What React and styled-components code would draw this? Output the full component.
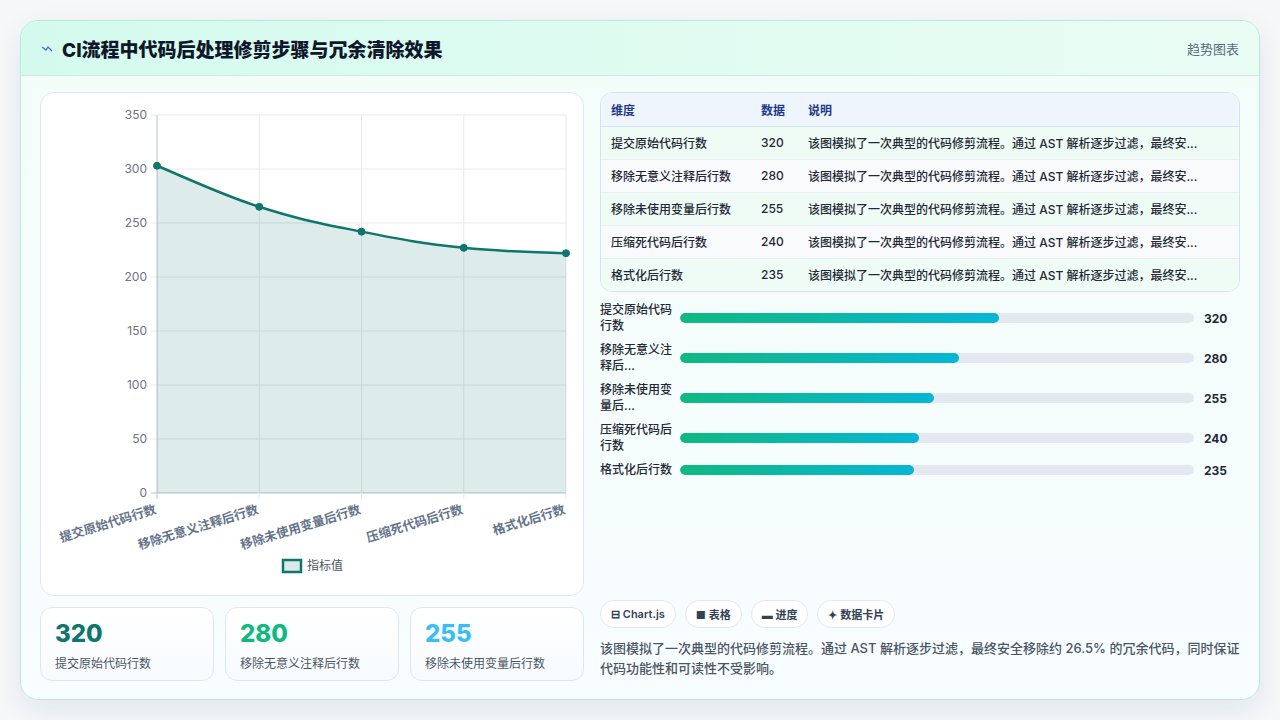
import React from "react";
import styled, { createGlobalStyle } from "styled-components";

const Global = createGlobalStyle`
  html, body { margin: 0; padding: 0; background: #f3f6f8; }
  body { font-family: Inter, "Noto Sans CJK SC", sans-serif; }
  * { box-sizing: border-box; }
`;

const Page = styled.div`
  width: 1280px;
  height: 720px;
  padding: 20px;
  background: #f5f7f9;
`;

const Card = styled.div`
  height: 680px;
  border-radius: 18px;
  border: 1px solid #b4ecdc;
  background: linear-gradient(180deg, #f2fdf8 0%, #f8fdff 100%);
  box-shadow: 0 10px 30px rgba(15, 40, 60, 0.08);
  overflow: hidden;
  display: flex;
  flex-direction: column;
`;

const Header = styled.div`
  height: 56px;
  display: flex;
  align-items: center;
  justify-content: space-between;
  padding: 0 20px;
  background: linear-gradient(90deg, #d4faee 0%, #eafdf4 100%);
  border-bottom: 1px solid #cde9e8;
`;

const Title = styled.h1`
  margin: 0;
  font-size: 19px;
  font-weight: 800;
  color: #0f172a;
  display: flex;
  align-items: center;
  gap: 9px;
`;

const Tag = styled.span`
  font-size: 13px;
  color: #5b6b80;
`;

const Body = styled.div`
  flex: 1;
  display: grid;
  grid-template-columns: 544px 640px;
  gap: 16px;
  padding: 16px 19px 18px 19px;
`;

const Col = styled.div`
  display: flex;
  flex-direction: column;
  gap: ${p => p.$gap || 0}px;
`;

const ChartCard = styled.div`
  height: 504px;
  background: #fff;
  border: 1px solid #e1e8ef;
  border-radius: 14px;
  overflow: hidden;
`;

const Kpis = styled.div`
  display: grid;
  grid-template-columns: repeat(3, 1fr);
  gap: 11px;
`;

const Kpi = styled.div`
  height: 74px;
  border: 1px solid #dce7f3;
  border-radius: 12px;
  background: linear-gradient(180deg, #ffffff, #f7fbfe);
  padding: 12px 14px;
`;

const KpiValue = styled.div`
  font-size: 24px;
  font-weight: 800;
  line-height: 28px;
  color: ${p => p.$c};
`;

const KpiLabel = styled.div`
  font-size: 12px;
  color: #4b5563;
  margin-top: 6px;
`;

const TableWrap = styled.div`
  border: 1px solid #d6e3ee;
  border-radius: 12px;
  overflow: hidden;
  background: #fff;
`;

const Table = styled.table`
  width: 100%;
  border-collapse: collapse;
  font-size: 12px;
  th, td { text-align: left; padding: 0 10px; height: 33px; white-space: nowrap; }
  th { background: #eef5fd; color: #1e3a8a; font-weight: 600; border-bottom: 1px solid #d6e3ee; }
  td { color: #1f2937; font-weight: 500; border-bottom: 1px solid #e8eef3; }
  tr:last-child td { border-bottom: none; }
  tbody tr:nth-child(odd) td { background: #effcf5; }
  tbody tr:nth-child(even) td { background: #f8fafc; }
`;

const Bars = styled.div`
  display: flex;
  flex-direction: column;
  gap: 8px;
  padding: 10px 0 0 0;
  height: 252px;
`;

const BarRow = styled.div`
  display: grid;
  grid-template-columns: 74px 1fr 40px;
  gap: 6px;
  align-items: center;
`;

const BarLabel = styled.div`
  font-size: 12px;
  line-height: 16px;
  color: #1f2937;
  font-weight: 500;
`;

const Track = styled.div`
  height: 10px;
  border-radius: 5px;
  background: #e3e8f1;
  overflow: hidden;
`;

const Fill = styled.div`
  height: 100%;
  border-radius: 5px;
  background: linear-gradient(90deg, #10b981, #06b6d4);
`;

const BarValue = styled.div`
  font-size: 12px;
  font-weight: 700;
  color: #1f2937;
  padding-left: 4px;
`;

const Pills = styled.div`
  display: flex;
  gap: 9px;
  margin-top: 56px;
`;

const Pill = styled.span`
  height: 28px;
  padding: 0 10px;
  border-radius: 14px;
  border: 1px solid #e2e8f0;
  background: #fff;
  font-size: 11px;
  font-weight: 600;
  color: #334155;
  display: inline-flex;
  align-items: center;
  gap: 3px;
`;

const Note = styled.p`
  margin: 10px 0 0 0;
  font-size: 13px;
  line-height: 20px;
  color: #4b5563;
  font-weight: 500;
`;

const rows = [
  ["提交原始代码行数", 320, "提交原始代码\n行数"],
  ["移除无意义注释后行数", 280, "移除无意义注\n释后..."],
  ["移除未使用变量后行数", 255, "移除未使用变\n量后..."],
  ["压缩死代码后行数", 240, "压缩死代码后\n行数"],
  ["格式化后行数", 235, "格式化后行数"],
];
const desc = "该图模拟了一次典型的代码修剪流程。通过 AST 解析逐步过滤，最终安...";

const X0 = 116, X1 = 525, Y0 = 400, H = 378;
const pts = [303, 265, 242, 227, 222].map((v, i) => [X0 + (i * (X1 - X0)) / 4, Y0 - (v * H) / 350]);

function curve(p) {
  let d = `M${p[0][0]},${p[0][1]}`;
  for (let i = 0; i < p.length - 1; i++) {
    const a = p[i - 1] || p[i], b = p[i], c = p[i + 1], e = p[i + 2] || c;
    const t = 0.2;
    d += ` C${b[0] + (c[0] - a[0]) * t},${b[1] + (c[1] - a[1]) * t} ${c[0] - (e[0] - b[0]) * t},${c[1] - (e[1] - b[1]) * t} ${c[0]},${c[1]}`;
  }
  return d;
}

function Chart() {
  const line = curve(pts);
  return (
    <svg width="544" height="504" viewBox="0 0 544 504" fontFamily="Inter, 'Noto Sans CJK SC', sans-serif">
      {[0, 50, 100, 150, 200, 250, 300, 350].map(v => {
        const y = Y0 - (v * H) / 350;
        return (
          <g key={v}>
            <line x1={X0 - 6} x2={X1} y1={y} y2={y} stroke={v === 0 ? "#b8c4d0" : "#e5e9ee"} />
            <text x={X0 - 10} y={y + 4} fontSize="12" fill="#6b7280" textAnchor="end">{v}</text>
          </g>
        );
      })}
      {pts.map(([x], i) => (
        <line key={i} x1={x} x2={x} y1={22} y2={Y0 + 6} stroke={i === 0 ? "#b8c4d0" : "#e5e9ee"} />
      ))}
      <path d={`${line} L${X1},${Y0} L${X0},${Y0} Z`} fill="rgba(15,118,110,0.14)" />
      <path d={line} fill="none" stroke="#0f766e" strokeWidth="2.5" />
      {pts.map(([x, y], i) => (
        <circle key={i} cx={x} cy={y} r="3.5" fill="#0f766e" stroke="#0f766e" />
      ))}
      {rows.map(([l], i) => {
        const x = pts[i][0];
        return (
          <text key={l} x={x} y={Y0 + 20} fontSize="12.5" fontWeight="600" fill="#64748b" textAnchor="end"
            transform={`rotate(-17 ${x} ${Y0 + 20})`}>{l}</text>
        );
      })}
      <rect x="242" y="467" width="18" height="12" fill="#dbe9e7" stroke="#0f766e" strokeWidth="2.5" />
      <text x="266" y="477" fontSize="12" fill="#4b5563">指标值</text>
    </svg>
  );
}

export default function App() {
  return (
    <Page>
      <Global />
      <Card>
        <Header>
          <Title>
            <svg width="12" height="12" viewBox="0 0 12 12">
              <path d="M1 5 L5 8 L7 5 L11 9" fill="none" stroke="#3b6fd8" strokeWidth="1.3" />
            </svg>
            CI流程中代码后处理修剪步骤与冗余清除效果
          </Title>
          <Tag>趋势图表</Tag>
        </Header>
        <Body>
          <Col $gap={11}>
            <ChartCard><Chart /></ChartCard>
            <Kpis>
              <Kpi><KpiValue $c="#0f766e">320</KpiValue><KpiLabel>提交原始代码行数</KpiLabel></Kpi>
              <Kpi><KpiValue $c="#10b981">280</KpiValue><KpiLabel>移除无意义注释后行数</KpiLabel></Kpi>
              <Kpi><KpiValue $c="#38bdf8">255</KpiValue><KpiLabel>移除未使用变量后行数</KpiLabel></Kpi>
            </Kpis>
          </Col>
          <Col>
            <TableWrap>
              <Table>
                <thead><tr><th style={{ width: 150 }}>维度</th><th style={{ width: 47 }}>数据</th><th>说明</th></tr></thead>
                <tbody>
                  {rows.map(([l, v]) => (
                    <tr key={l}><td>{l}</td><td>{v}</td><td>{desc}</td></tr>
                  ))}
                </tbody>
              </Table>
            </TableWrap>
            <Bars>
              {rows.map(([l, v, short]) => (
                <BarRow key={l}>
                  <BarLabel>{short.split("\n").map((s, i) => <div key={i}>{s}</div>)}</BarLabel>
                  <Track><Fill style={{ width: `${(v / 516) * 100}%` }} /></Track>
                  <BarValue>{v}</BarValue>
                </BarRow>
              ))}
            </Bars>
            <Pills>
              <Pill>⊟ Chart.js</Pill>
              <Pill>■ 表格</Pill>
              <Pill>▬ 进度</Pill>
              <Pill>✦ 数据卡片</Pill>
            </Pills>
            <Note>该图模拟了一次典型的代码修剪流程。通过 AST 解析逐步过滤，最终安全移除约 26.5% 的冗余代码，同时保证代码功能性和可读性不受影响。</Note>
          </Col>
        </Body>
      </Card>
    </Page>
  );
}
